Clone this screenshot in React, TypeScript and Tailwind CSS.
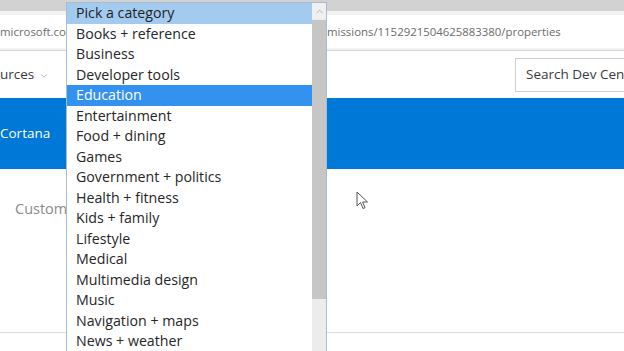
import { ChevronDown, ChevronUp } from "lucide-react";

const categories = [
  "Pick a category",
  "Books + reference",
  "Business",
  "Developer tools",
  "Education",
  "Entertainment",
  "Food + dining",
  "Games",
  "Government + politics",
  "Health + fitness",
  "Kids + family",
  "Lifestyle",
  "Medical",
  "Multimedia design",
  "Music",
  "Navigation + maps",
  "News + weather",
];

function CategoryList() {
  return (
    <div className="absolute left-[66px] top-[2px] flex h-[360px] w-[261px] border border-[#a9bccf] bg-white">
      <div className="flex-1">
        {categories.map((c, i) => (
          <div
            key={c}
            className={
              "flex h-[20.5px] items-center pl-[9px] text-[14.2px] leading-none " +
              (i === 0
                ? "bg-[#a3cbf0] text-[#1e1e1e]"
                : i === 4
                ? "bg-[#3392ef] text-white"
                : "text-[#262626]")
            }
          >
            {c}
          </div>
        ))}
      </div>

      {/* scrollbar */}
      <div className="flex w-[14px] flex-col bg-[#ececec]">
        <div className="flex h-[16px] items-center justify-center bg-[#f0f0f0]">
          <ChevronUp size={11} strokeWidth={1.5} className="text-[#9a9a9a]" />
        </div>
        <div className="mt-[1px] h-[279px] bg-[#c6c6c6]" />
      </div>
    </div>
  );
}

export default function App() {
  return (
    <div className="relative h-[351px] w-[624px] overflow-hidden bg-white font-['Open_Sans',sans-serif]">
      {/* browser chrome */}
      <div className="h-[11px] bg-[#d2d2d2]" />
      <div className="h-[4px] bg-[#f2f2f2]" />
      <div className="flex h-[33px] items-center whitespace-nowrap bg-white text-[11.4px] text-[#6b6b6b]">
        <div className="w-[327px] overflow-hidden">microsoft.com/en-us/dashboard/apps/sub</div>
        <div>missions/1152921504625883380/properties</div>
      </div>
      <div className="h-[3px] border-b border-[#d6d6d6] bg-[#f4f4f4]" />

      {/* site nav */}
      <div className="flex h-[47px] items-center">
        <div className="flex items-center gap-[5px] text-[13.5px] text-[#3a3a3a]">
          <span>urces</span>
          <ChevronDown size={10} strokeWidth={1.5} className="mt-[2px] text-[#8a8a8a]" />
        </div>
        <div className="ml-auto flex h-[34px] w-[109px] items-center self-center overflow-hidden border border-r-0 border-[#cfcfcf] pl-[10px] whitespace-nowrap text-[13.5px] text-[#3a3a3a]">
          Search Dev Center
        </div>
      </div>

      {/* blue header */}
      <div className="flex h-[71px] items-center bg-[#0078d7] text-[13.5px] text-white">
        <span>Cortana</span>
      </div>

      {/* body */}
      <div className="h-[164px] border-b border-[#dcdcdc] pl-[15px] pt-[29px] text-[14.5px] text-[#8a8a8a]">
        Customer group
      </div>

      {/* mouse pointer */}
      <svg className="absolute left-[356px] top-[191px]" width="13" height="20" viewBox="0 0 13 20">
        <path d="M1 1 L1 15 L4.5 11.5 L7 17.5 L9 16.7 L6.6 11 L11.5 11 Z" fill="white" stroke="#555" strokeWidth="1" strokeLinejoin="round" />
      </svg>

      <CategoryList />
    </div>
  );
}
